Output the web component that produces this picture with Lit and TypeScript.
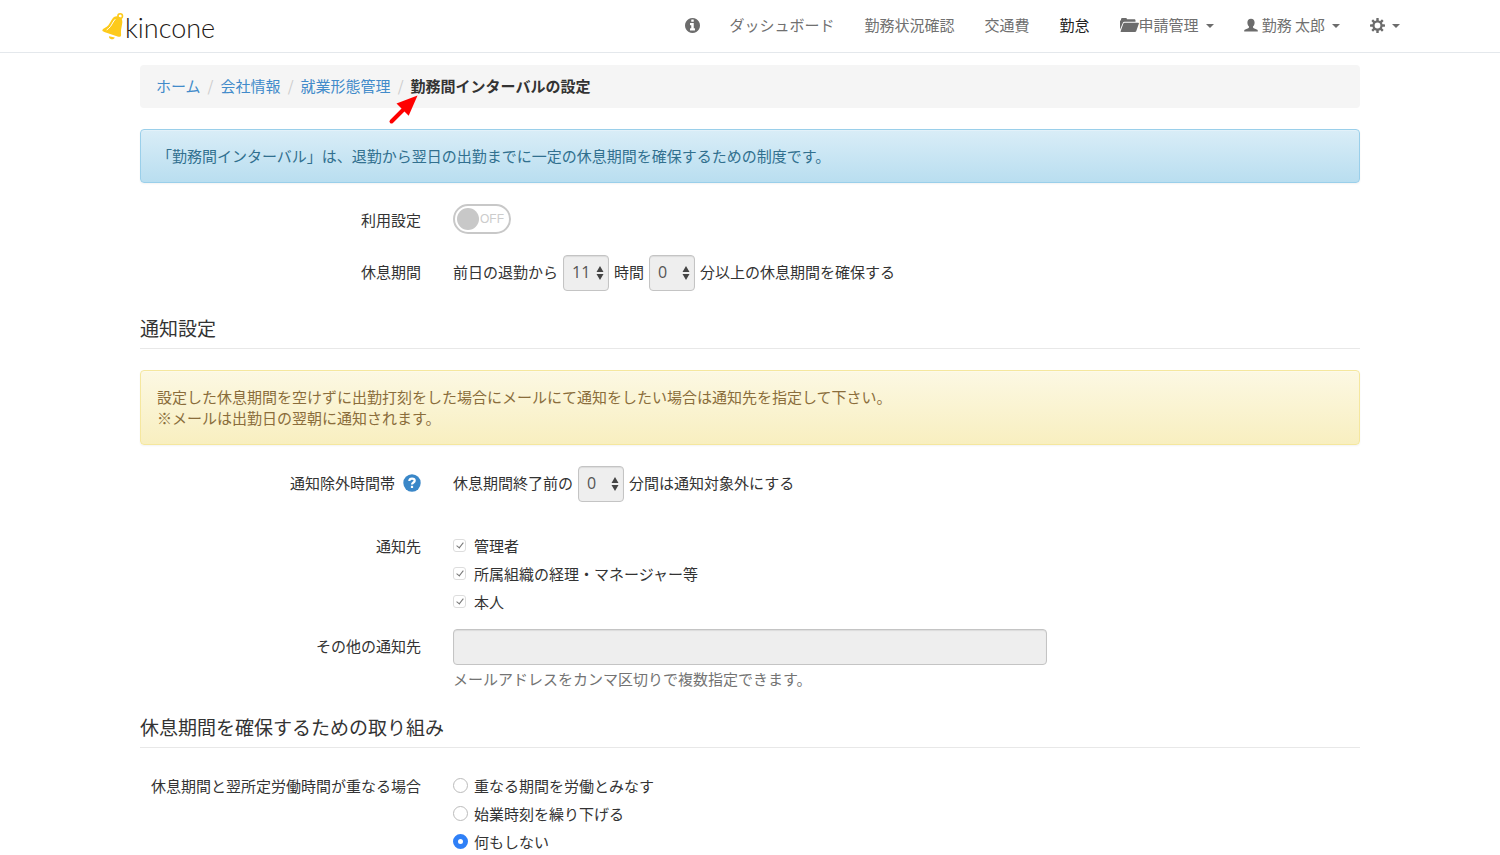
import { LitElement, html, css, svg } from "lit";
import { customElement, property } from "lit/decorators.js";

const caret = html`<svg class="caret" width="8" height="4" viewBox="0 0 8 4" aria-hidden="true"><path d="M0 0h8L4 4z" /></svg>`;

const teeth = [0, 45, 90, 135, 180, 225, 270, 315].map(
  (angle) => svg`<rect x="6.7" y="0" width="2.6" height="4" rx="0.4" transform="rotate(${angle} 8 8)" />`
);

@customElement("number-select")
class NumberSelect extends LitElement {
  @property() value = "0";
  @property() label = "";

  static styles = css`
    :host {
      display: inline-block;
    }
    .box {
      display: grid;
      align-items: center;
      width: 46px;
    }
    select,
    .arrows {
      grid-area: 1 / 1;
    }
    select {
      appearance: none;
      box-sizing: border-box;
      width: 100%;
      height: 36px;
      margin: 0;
      padding: 0 8px 2px;
      border: 1px solid #c4c4c4;
      border-radius: 4px;
      background: #eee;
      box-shadow: inset 0 1px 1px rgba(0, 0, 0, 0.08);
      color: #555;
      opacity: 1;
      font: 16px/20px "Open Sans", "Noto Sans CJK JP", sans-serif;
    }
    .arrows {
      justify-self: end;
      margin-right: 5px;
      fill: #444;
      pointer-events: none;
    }
  `;

  render() {
    return html`<span class="box">
      <select aria-label=${this.label} disabled><option>${this.value}</option></select>
      <svg class="arrows" width="8" height="14" viewBox="0 0 8 14" aria-hidden="true">
        <path d="M.5 6L4 0l3.500 6zM.5 8h7L4 14z" />
      </svg>
    </span>`;
  }
}

@customElement("site-header")
class SiteHeader extends LitElement {
  static styles = css`
    :host {
      display: block;
      border-bottom: 1px solid #e4e8ec;
    }
    .bar {
      display: flex;
      align-items: center;
      justify-content: space-between;
      box-sizing: border-box;
      max-width: 1300px;
      height: 52px;
      margin: 0 auto;
    }
    a {
      color: #707070;
      text-decoration: none;
    }
    .logo {
      display: flex;
      align-items: center;
      padding-left: 2px;
      font: 300 27px/32px Lato, sans-serif;
      color: #231815;
    }
    .logo span {
      padding-top: 3px;
    }
    .links {
      display: flex;
      align-items: center;
      gap: 30px;
      padding-bottom: 2px;
    }
    .links a {
      display: flex;
      align-items: center;
      white-space: nowrap;
      line-height: 22px;
    }
    .links .current {
      color: #222;
    }
    svg {
      fill: #6c6c6c;
      flex: none;
    }
    .caret {
      margin: 2px 0 0 7px;
    }
    .user {
      margin-right: 4px;
    }
  `;

  render() {
    return html`<header class="bar">
      <a class="logo" href="#" aria-label="kincone">
        <svg width="23" height="28" viewBox="0 0 23 28" aria-hidden="true">
          <circle cx="18.200" cy="4" r="2.300" fill="none" stroke="#fdca1b" stroke-width="1.600" />
          <path fill="#fdca1b" d="M7 24.300l5.800 1.300c-.6 1.500-2 2-3.500 1.600-1.500-.3-2.500-1.300-2.300-2.900z" />
          <path fill="#fdca1b" d="M16.300 4.500c2.800.6 4.300 2.800 4 6-.3 3.500-1.600 6.800-1.300 10.700.1 1.300.3 2.600-.5 3.200-.7.500-1.800.3-3 0L2.300 20c-1.700-.6-2.500-1.500-1.600-2.600.7-.8 2.300-1.300 4-2.600 2.500-2 3.700-4.700 5-7 1.600-2.800 3.800-3.900 6.600-3.300z" />
          <path fill="none" stroke="#fff" stroke-width="1" stroke-linecap="round" d="M13 7.500c-2 2-3 5-4.700 7.200-1 1.300-2.100 2.200-3.300 3" />
        </svg>
        <span>kincone</span>
      </a>
      <nav class="links">
        <a href="#" aria-label="お知らせ">
          <svg width="15" height="15" viewBox="0 128 1536 1536" aria-hidden="true">
            <path d="M1024 1376v-160q0-14-9-23t-23-9h-96v-512q0-14-9-23t-23-9h-320q-14 0-23 9t-9 23v160q0 14 9 23t23 9h96v320h-96q-14 0-23 9t-9 23v160q0 14 9 23t23 9h448q14 0 23-9t9-23zm-128-896v-160q0-14-9-23t-23-9h-192q-14 0-23 9t-9 23v160q0 14 9 23t23 9h192q14 0 23-9t9-23zm640 416q0 209-103 385.500t-279.500 279.500-385.500 103-385.500-103-279.500-279.500-103-385.500 103-385.500 279.500-279.500 385.500-103 385.500 103 279.500 279.500 103 385.500z" />
          </svg>
        </a>
        <a href="#">ダッシュボード</a>
        <a href="#">勤務状況確認</a>
        <a href="#">交通費</a>
        <a href="#" class="current">勤怠</a>
        <a href="#">
          <svg width="19" height="14" viewBox="0 0 19 14" aria-hidden="true">
            <path d="M0 11.500V2.600h1V1.300C1 .6 1.500 0 2.300 0h3.500C6.500 0 7 .6 7 1.300h7.200c.8 0 1.300.5 1.300 1.300v1.100H4.500c-.8 0-1.300.3-1.600 1z" />
            <path d="M4.600 4.700h13.600c.6 0 .9.400.7.900l-2.700 7.600c-.2.500-.6.800-1.200.8H1.300c-.6 0-.8-.4-.6-.9l2.700-7.600c.2-.5.600-.8 1.200-.8z" />
          </svg>
          <span>申請管理</span>${caret}
        </a>
        <a href="#">
          <svg class="user" width="14" height="14" viewBox="0 0 14 14" aria-hidden="true">
            <path d="M7 .7c2.300 0 3.600 1.500 3.600 3.700 0 1.600-.5 3-1.600 4v.9c0 .5.300.8.800 1l3 1.300c.8.300 1 .8 1 1.300v.6H.2v-.6c0-.5.200-1 1-1.300l3-1.300c.5-.2.800-.5.800-1v-.9c-1.100-1-1.600-2.400-1.600-4C3.400 2.200 4.700.7 7 .7z" />
          </svg>
          <span>勤務 太郎</span>${caret}
        </a>
        <a href="#" aria-label="設定">
          <svg width="15" height="15" viewBox="0 0 16 16" aria-hidden="true">
            ${teeth}
            <circle cx="8" cy="8" r="4.300" fill="none" stroke="#6c6c6c" stroke-width="2.400" />
          </svg>
          ${caret}
        </a>
      </nav>
    </header>`;
  }
}

@customElement("app-root")
class AppRoot extends LitElement {
  static styles = css`
    :host {
      display: block;
      background: #fff;
      color: #333;
      font: 15px/21px "Noto Sans CJK JP", sans-serif;
    }
    main {
      max-width: 1220px;
      margin: 0 auto;
      padding-top: 12px;
    }
    .crumbs {
      display: flex;
      margin: 0 0 21px;
      padding: 10px 16px 12px;
      border-radius: 4px;
      background: #f5f5f5;
      list-style: none;
    }
    .crumbs a {
      color: #428bca;
      text-decoration: none;
    }
    .crumbs li + li::before {
      content: "/";
      display: inline-block;
      width: 20px;
      text-align: center;
      color: #ccc;
      font-weight: 400;
    }
    .crumbs .here {
      position: relative;
      font-weight: 700;
    }
    .pointer {
      position: absolute;
      left: -3px;
      top: 20px;
    }
    .note {
      padding: 15px 16px 16px;
      border: 1px solid #9acfea;
      border-radius: 4px;
      background: linear-gradient(#d9edf7, #b9def0);
      box-shadow: inset 0 1px 0 rgba(255, 255, 255, 0.25), 0 1px 2px rgba(0, 0, 0, 0.05);
      color: #31708f;
    }
    .warn {
      border-color: #f5e79e;
      background: linear-gradient(#fcf8e3, #f8efc0);
      color: #8a6d3b;
    }
    h2 {
      margin: 25px 0 21px;
      padding-bottom: 9px;
      border-bottom: 1px solid #e8e8e8;
      font-size: 19px;
      line-height: 23px;
      font-weight: 400;
    }
    .row {
      display: grid;
      grid-template-columns: 1fr 2fr 1fr;
      margin: 21px -16px 0;
    }
    .row.start {
      align-items: start;
    }
    .row.middle {
      align-items: center;
    }
    .name {
      display: flex;
      justify-content: flex-end;
      align-items: center;
      gap: 8px;
      padding: 0 16px;
      white-space: nowrap;
    }
    .row.middle .name,
    .inline > span {
      padding-bottom: 3px;
    }
    .row.middle .name.plain {
      padding-bottom: 0;
    }
    .control {
      padding: 0 16px;
    }
    .inline {
      display: flex;
      align-items: center;
      gap: 5px;
      white-space: nowrap;
    }
    .switch {
      display: inline-grid;
      align-items: center;
      vertical-align: top;
      width: 58px;
    }
    .switch input,
    .switch span {
      grid-area: 1 / 1;
    }
    .switch input {
      appearance: none;
      box-sizing: border-box;
      width: 58px;
      height: 30px;
      margin: 0;
      padding: 2px;
      border: 2px solid #c8c8c8;
      border-radius: 15px;
      background: #fff;
    }
    .switch input::before {
      content: "";
      display: block;
      width: 22px;
      height: 22px;
      border-radius: 50%;
      background: #c8c8c8;
    }
    .switch span {
      justify-self: end;
      margin-right: 7px;
      color: #ccc;
      font: 12px/16px "Liberation Sans", sans-serif;
    }
    .options {
      display: grid;
      gap: 7px;
    }
    .options label {
      display: flex;
      align-items: center;
    }
    .options input {
      appearance: none;
      box-sizing: border-box;
      display: grid;
      place-items: center;
      margin: 0;
      border: 1px solid #ddd;
      background: #fff;
    }
    .options input[type="checkbox"] {
      width: 13px;
      height: 13px;
      border-radius: 3px;
    }
    .options input[type="checkbox"]:checked::before {
      content: "";
      width: 3px;
      height: 6px;
      border: solid #777;
      border-width: 0 1px 1px 0;
      transform: translateY(-1px) rotate(38deg);
    }
    .options input[type="radio"] {
      width: 15px;
      height: 15px;
      border-color: #bbb;
      border-radius: 50%;
    }
    .options input[type="radio"]:checked {
      border: 5px solid #2f80f7;
    }
    .options .check {
      gap: 8px;
    }
    .options .radio {
      gap: 6px;
    }
    .field {
      box-sizing: border-box;
      width: 100%;
      height: 36px;
      padding: 6px 12px;
      border: 1px solid #c4c4c4;
      border-radius: 4px;
      background: #eee;
      box-shadow: inset 0 1px 1px rgba(0, 0, 0, 0.08);
      font: inherit;
      display: block;
    }
    .tall {
      line-height: 34px;
    }
    .help {
      margin: 3px 0 0;
      padding-bottom: 1px;
      color: #737373;
    }
    .row.tight {
      margin-top: 17px;
    }
    .row.loose {
      margin-top: 33px;
    }
    .row.last {
      margin-top: 27px;
    }
  `;

  render() {
    return html`
      <site-header></site-header>
      <main>
        <ol class="crumbs">
          <li><a href="#">ホーム</a></li>
          <li><a href="#">会社情報</a></li>
          <li><a href="#">就業形態管理</a></li>
          <li class="here">勤務間インターバルの設定<svg class="pointer" width="30" height="30" viewBox="0 0 30 30" aria-hidden="true">
              <path d="M3.500 26.500L16 14" stroke="#f00" stroke-width="4" stroke-linecap="round" />
              <path d="M29.500 .5L20.700 20.800 8.500 8.500z" fill="#f00" />
            </svg></li>
        </ol>

        <div class="note">「勤務間インターバル」は、退勤から翌日の出勤までに一定の休息期間を確保するための制度です。</div>

        <div class="row middle">
          <label class="name plain" for="use">利用設定</label>
          <div class="control">
            <span class="switch"><input id="use" type="checkbox" role="switch" disabled /><span>OFF</span></span>
          </div>
        </div>
        <div class="row middle">
          <span class="name">休息期間</span>
          <div class="control inline">
            <span>前日の退勤から</span>
            <number-select value="11" label="時間"></number-select>
            <span>時間</span>
            <number-select value="0" label="分"></number-select>
            <span>分以上の休息期間を確保する</span>
          </div>
        </div>

        <h2>通知設定</h2>
        <div class="note warn">
          設定した休息期間を空けずに出勤打刻をした場合にメールにて通知をしたい場合は通知先を指定して下さい。<br />※メールは出勤日の翌朝に通知されます。
        </div>

        <div class="row middle">
          <span class="name">
            通知除外時間帯
            <svg width="18" height="18" viewBox="0 0 18 18" aria-hidden="true">
              <circle cx="9" cy="9" r="8.700" fill="#3a87c8" />
              <path d="M6.300 7c0-1.600 1.100-2.400 2.700-2.400s2.700.8 2.700 2.100C11.700 8.500 9 8.500 9 10.500" fill="none" stroke="#fff" stroke-width="2.200" />
              <rect x="7.900" y="11.800" width="2.200" height="2.200" fill="#fff" />
            </svg>
          </span>
          <div class="control inline">
            <span>休息期間終了前の</span>
            <number-select value="0" label="通知除外時間帯"></number-select>
            <span>分間は通知対象外にする</span>
          </div>
        </div>

        <div class="row start loose">
          <span class="name">通知先</span>
          <div class="control options">
            <label class="check"><input type="checkbox" checked disabled />管理者</label>
            <label class="check"><input type="checkbox" checked disabled />所属組織の経理・マネージャー等</label>
            <label class="check"><input type="checkbox" checked disabled />本人</label>
          </div>
        </div>

        <div class="row start tight">
          <label class="name tall" for="others">その他の通知先</label>
          <div class="control">
            <input class="field" id="others" type="text" disabled />
            <p class="help">メールアドレスをカンマ区切りで複数指定できます。</p>
          </div>
        </div>

        <h2>休息期間を確保するための取り組み</h2>
        <div class="row start last">
          <span class="name">休息期間と翌所定労働時間が重なる場合</span>
          <div class="control options">
            <label class="radio"><input type="radio" name="overlap" />重なる期間を労働とみなす</label>
            <label class="radio"><input type="radio" name="overlap" />始業時刻を繰り下げる</label>
            <label class="radio"><input type="radio" name="overlap" checked />何もしない</label>
          </div>
        </div>
      </main>
    `;
  }
}
